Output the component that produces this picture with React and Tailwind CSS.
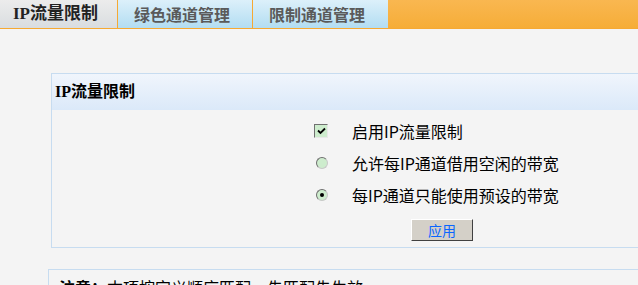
import React from "react";

const cjk = { fontFamily: '"Noto Sans CJK SC", "Liberation Sans", sans-serif' };
const serifBold = { fontFamily: '"Liberation Serif", "Noto Sans CJK SC", serif' };

function Radio({ checked }) {
  return (
    <span className="relative inline-block w-[12px] h-[12px] rounded-full bg-[#cdeccd] border border-[#6e6e6e] border-r-[#c8c8c8] border-b-[#c8c8c8]">
      {checked && (
        <span className="absolute left-[3px] top-[3px] w-[4px] h-[4px] rounded-full bg-black" />
      )}
    </span>
  );
}

function Checkbox() {
  return (
    <span className="inline-flex items-center justify-center w-[14px] h-[14px] bg-[#cdeccd] border border-[#707070] border-r-[#e8e8e8] border-b-[#e8e8e8]">
      <svg width="9" height="8" viewBox="0 0 9 8">
        <path d="M1 3.5 L3.5 6 L8 1.5" stroke="#000" strokeWidth="1.8" fill="none" />
      </svg>
    </span>
  );
}

export default function App() {
  return (
    <div className="w-[638px] h-[285px] overflow-hidden bg-[#f4f4f4]" style={cjk}>
      {/* Tab bar */}
      <div className="flex h-[29px] border-b border-[#f6a933]">
        <div
          className="w-[117px] h-[28px] flex items-center pl-[13px] text-[17px] font-bold text-[#222] bg-gradient-to-b from-[#ececec] to-[#d9dde0]"
          style={serifBold}
        >
          IP流量限制
        </div>
        <div className="w-[136px] h-[28px] flex items-center pl-[16px] text-[16px] font-bold text-[#5a5a5a] bg-gradient-to-b from-[#dcf0fa] to-[#b2ddf2] border-l border-r border-[#f6a933]">
          绿色通道管理
        </div>
        <div className="w-[135px] h-[28px] flex items-center pl-[16px] text-[16px] font-bold text-[#5a5a5a] bg-gradient-to-b from-[#dcf0fa] to-[#b2ddf2]">
          限制通道管理
        </div>
        <div className="flex-1 h-[28px] bg-gradient-to-b from-[#f9b750] to-[#f6ad37]" />
      </div>

      {/* Main panel */}
      <div className="ml-[51px] mt-[44px] border border-[#c7dcf0] border-r-0">
        <div className="h-[36px] flex items-center pl-[3px] bg-gradient-to-b from-[#f0f5fc] to-[#dbe9f9]">
          <span className="text-[16px] font-bold text-black" style={serifBold}>IP流量限制</span>
        </div>
        <div className="pt-[5px] pb-[6px] pl-[262px] text-[16px] text-black">
          <div className="h-[32px] flex items-center">
            <span className="w-[38px] flex items-center"><Checkbox /></span>
            <span>启用IP流量限制</span>
          </div>
          <div className="h-[32px] flex items-center">
            <span className="w-[38px] flex items-center pl-[2px]"><Radio /></span>
            <span>允许每IP通道借用空闲的带宽</span>
          </div>
          <div className="h-[32px] flex items-center">
            <span className="w-[38px] flex items-center pl-[2px]"><Radio checked /></span>
            <span>每IP通道只能使用预设的带宽</span>
          </div>
          <div className="mt-[8px] pl-[97px]">
            <button className="w-[62px] h-[22px] bg-[#d4d0c8] border border-t-white border-l-white border-r-[#404040] border-b-[#404040] text-[14px] leading-none text-[#0a66ff] flex items-center justify-center no-underline">
              应用
            </button>
          </div>
        </div>
      </div>

      {/* Note panel */}
      <div className="ml-[48px] mt-[21px] border border-[#c7dcf0] border-r-0 h-[40px] pl-[10px] pt-[5px] text-[16px] text-black">
        <span className="font-bold">注意：</span>本项按定义顺序匹配，先匹配先生效。
      </div>
    </div>
  );
}
